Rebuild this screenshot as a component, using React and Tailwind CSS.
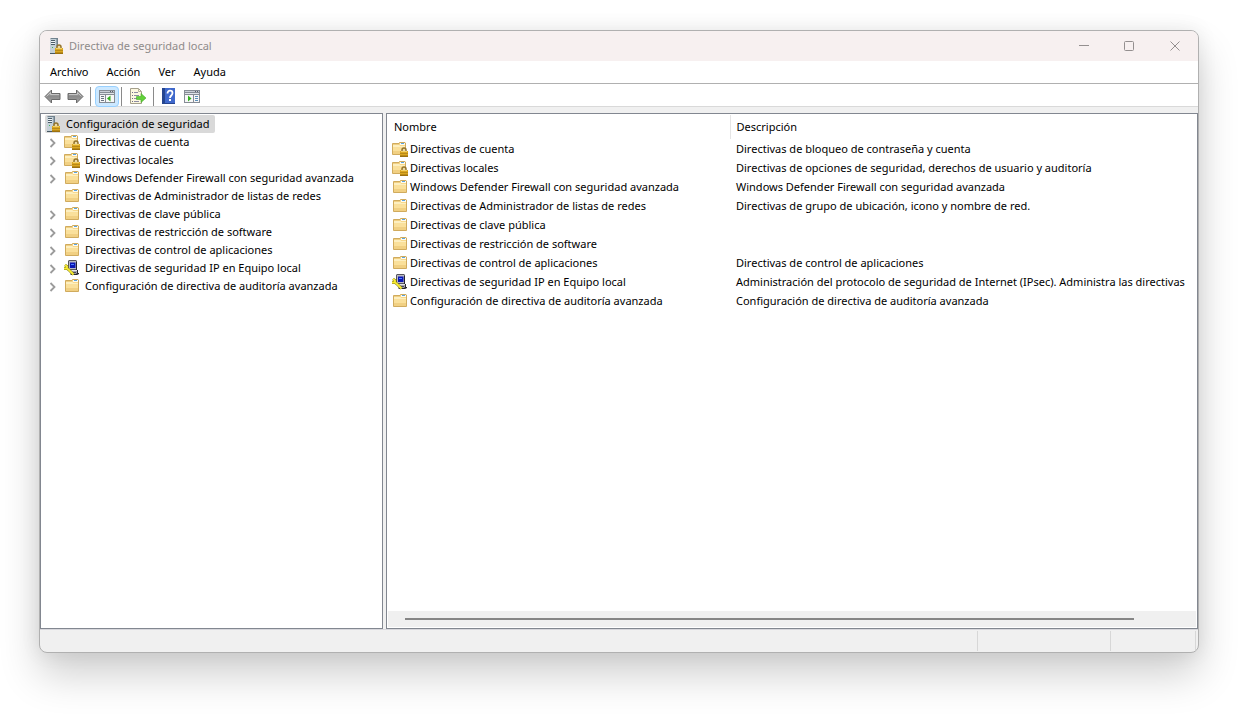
import React from "react";

const menus = ["Archivo", "Acción", "Ver", "Ayuda"];

const policies = [
  {
    name: "Directivas de cuenta",
    description: "Directivas de bloqueo de contraseña y cuenta",
    icon: "locked",
    expandable: true,
  },
  {
    name: "Directivas locales",
    description:
      "Directivas de opciones de seguridad, derechos de usuario y auditoría",
    icon: "locked",
    expandable: true,
  },
  {
    name: "Windows Defender Firewall con seguridad avanzada",
    description: "Windows Defender Firewall con seguridad avanzada",
    icon: "folder",
    expandable: true,
  },
  {
    name: "Directivas de Administrador de listas de redes",
    description: "Directivas de grupo de ubicación, icono y nombre de red.",
    icon: "folder",
    expandable: false,
  },
  {
    name: "Directivas de clave pública",
    description: "",
    icon: "folder",
    expandable: true,
  },
  {
    name: "Directivas de restricción de software",
    description: "",
    icon: "folder",
    expandable: true,
  },
  {
    name: "Directivas de control de aplicaciones",
    description: "Directivas de control de aplicaciones",
    icon: "folder",
    expandable: true,
  },
  {
    name: "Directivas de seguridad IP en Equipo local",
    description:
      "Administración del protocolo de seguridad de Internet (IPsec). Administra las directivas",
    icon: "ipsec",
    expandable: true,
  },
  {
    name: "Configuración de directiva de auditoría avanzada",
    description: "Configuración de directiva de auditoría avanzada",
    icon: "folder",
    expandable: true,
  },
];

const Padlock = () => (
  <g>
    <path
      d="M10 11V9a2 2 0 0 1 4 0v2"
      fill="#e9d9a8"
      stroke="#94742c"
      strokeWidth="1.5"
    />
    <rect x="8" y="10" width="8" height="6" fill="#dba721" />
    <path d="M9 10h6v1H9z" fill="#f3d269" />
    <path d="M8 12h8v1H8zM8 14h8v1H8z" fill="#b98a17" />
    <path d="M8 15h8v1H8z" fill="#9c7110" />
  </g>
);

const FolderShape = () => (
  <g>
    <path
      d="M.5 1.500h6.500l.5-1h5.500l.5.5v11.500H.5z"
      fill="#f6d88b"
      stroke="#d0ab5e"
    />
    <path d="M8 1h5v2H8z" fill="#fffaf0" />
    <path d="M9 1h3v1H9z" fill="#5aa6e0" />
    <path d="M1 2h6v1H1z" fill="#f0cf82" />
    <path d="M1 3h6.500l.5 1h5v1H1z" fill="#fdefc0" />
    <path d="M1 5h12v4H1z" fill="#fae09b" />
    <path d="M1 9h12v3H1z" fill="#f1d083" />
  </g>
);

const FolderIcon = () => (
  <svg width="16" height="16" viewBox="-1 -1 16 16" aria-hidden="true">
    <FolderShape />
  </svg>
);

const LockedFolderIcon = () => (
  <svg width="16" height="16" viewBox="0 -1 16 16" aria-hidden="true">
    <FolderShape />
    <g transform="translate(0 -1)">
      <Padlock />
    </g>
  </svg>
);

const ServerIcon = () => (
  <svg width="16" height="16" viewBox="0 0 16 16" aria-hidden="true">
    <path d="M1 1l1-1h7v15l-1 1H1z" fill="#71828e" />
    <path d="M1 1h6v15H1z" fill="#c4d0d8" />
    <path d="M7 1h1v15H7z" fill="#93a3ae" />
    <path d="M2 2h4v1H2zM2 4h4v1H2zM2 6h4v1H2z" fill="#4c5d69" />
    <path d="M2 3h4v1H2zM2 5h4v1H2z" fill="#eef3f6" />
    <path d="M3 9h1v1H3z" fill="#45b45a" />
    <path d="M1 15h7v1H1z" fill="#465864" />
    <g transform="translate(-2 0)">
      <Padlock />
    </g>
  </svg>
);

const IpsecIcon = () => (
  <svg width="16" height="16" viewBox="0 0 16 16" aria-hidden="true">
    <path d="M4 1l1-1h7l1 1v8l-1 1H5L4 9z" fill="#55555e" />
    <path d="M5 1h7v8H5z" fill="#b9b9c2" />
    <path d="M6 2.500h5.500V8H6z" fill="#0b17b4" />
    <path d="M7 4h3v1H7z" fill="#4b82ff" />
    <path d="M6 10l7 0 1 2v2l-2 1H6z" fill="#a4a4ac" />
    <path d="M5 10h8v1H5z" fill="#e4e4e8" />
    <path d="M12 2h1v8h1v3h1v1l-2 1H7v-1h5l1-1v-3h-1z" fill="#26262e" />
    <path d="M8 12h4v1H8z" fill="#4c4c55" />
    <path
      d="M1 5l2 1.500v2L4.500 9.500l5 5M0 8.500l3 0"
      fill="none"
      stroke="#7a7410"
      strokeWidth="2.800"
    />
    <path
      d="M1 5l2 1.500v2L4.500 9.500l5 5M0 8.500l3 0"
      fill="none"
      stroke="#f8ec35"
      strokeWidth="1.800"
    />
  </svg>
);

const ArrowIcon = ({ flip = false }) => (
  <svg width="17" height="15" viewBox="0 0 17 15" aria-hidden="true">
    <defs>
      <linearGradient id="arrowFill" x1="0" y1="0" x2="0" y2="1">
        <stop offset="0" stopColor="#b9b9b9" />
        <stop offset="0.5" stopColor="#8b8b8b" />
        <stop offset="1" stopColor="#a4a4a4" />
      </linearGradient>
    </defs>
    <path
      d="M1 7.500L7.500 1v3.500h8.500v6H7.500V14z"
      fill="url(#arrowFill)"
      stroke="#6a6a6a"
      strokeLinejoin="round"
      transform={flip ? "matrix(-1 0 0 1 17 0)" : undefined}
    />
    <path
      d="M2.500 7.500l4-4v2h8.500"
      fill="none"
      stroke="#c4c4c4"
      transform={flip ? "matrix(-1 0 0 1 17 0)" : undefined}
    />
  </svg>
);

const PaneFrame = () => (
  <g>
    <path d="M0 1h16v13H0z" fill="#868c95" />
    <path d="M1 2h14v1H1z" fill="#c9ced6" />
    <path d="M11 2h1v1h-1zM13 2h1v1h-1z" fill="#59606b" />
    <path d="M1 4h14v1H1z" fill="#dfe3e8" />
    <path d="M1 6h14v7H1z" fill="#f7f7f7" />
  </g>
);

const TreePaneIcon = () => (
  <svg width="16" height="15" viewBox="0 0 16 15" aria-hidden="true">
    <PaneFrame />
    <path d="M6 6h1v7H6z" fill="#868c95" />
    <path d="M2 7h3v1H2zM2 9h3v1H2zM2 11h3v1H2z" fill="#68717f" />
    <path d="M11.500 6.500v6L8 9.500z" fill="#35b021" />
  </svg>
);

const ActionPaneIcon = () => (
  <svg width="16" height="15" viewBox="0 0 16 15" aria-hidden="true">
    <PaneFrame />
    <path d="M9 6h1v7H9z" fill="#868c95" />
    <path d="M11 7h3v1h-3zM11 9h3v1h-3zM11 11h3v1h-3z" fill="#5b8fb8" />
    <path d="M4 6.500v6l3.500-3z" fill="#35b021" />
  </svg>
);

const ExportIcon = () => (
  <svg width="17" height="16" viewBox="0 0 17 16" aria-hidden="true">
    <path
      d="M.5.5h8l3 3v12H.5z"
      fill="#fdf8e0"
      stroke="#a5a08c"
    />
    <path d="M8.500.5v3h3" fill="none" stroke="#b5b09c" />
    <path d="M2 4h1v1H2zM2 7h1v1H2zM2 10h1v1H2zM2 13h1v1H2z" fill="#6e6d84" />
    <path d="M4 4h4v1H4zM4 7h5v1H4zM4 10h4v1H4zM4 13h5v1H4z" fill="#8e8ca4" />
    <path
      d="M6.500 8.500h4.500V5.500l5 4.500-5 4.500v-3H6.500z"
      fill="#62d13a"
      stroke="#46a92c"
      strokeWidth="0.600"
    />
  </svg>
);

const HelpIcon = () => (
  <svg width="14" height="16" viewBox="0 0 14 16" aria-hidden="true">
    <path d="M0 0h13v16H0z" fill="#26458f" />
    <path d="M2 0h11v15H2z" fill="#4069cc" />
    <path d="M2 0h1v16H2z" fill="#24468f" />
    <path
      d="M5.500 5.500c0-4 5-3.500 5-.5 0 2.500-2.500 2.500-2.500 5"
      fill="none"
      stroke="#fff"
      strokeWidth="1.800"
    />
    <path d="M7 11h2v2H7z" fill="#fff" />
  </svg>
);

const ItemIcon = ({ type }) => {
  if (type === "locked") return <LockedFolderIcon />;
  if (type === "ipsec") return <IpsecIcon />;
  return <FolderIcon />;
};

const TitleBar = () => (
  <header className="flex h-[30px] shrink-0 items-center bg-[#f7f0f0] pl-[9px] text-[#8f8b8b]">
    <ServerIcon />
    <h1 className="ml-1 flex-1">Directiva de seguridad local</h1>
    <button aria-label="Minimizar" className="flex w-[45px] justify-center">
      <svg width="11" height="11" viewBox="0 0 11 11">
        <path d="M0 4.500h10" stroke="#948f8f" />
      </svg>
    </button>
    <button aria-label="Maximizar" className="flex w-[45px] justify-center">
      <svg width="11" height="11" viewBox="0 0 11 11">
        <rect
          x="0.500"
          y="0.500"
          width="9"
          height="9"
          rx="1"
          fill="none"
          stroke="#948f8f"
        />
      </svg>
    </button>
    <button aria-label="Cerrar" className="flex w-[46px] justify-center">
      <svg width="11" height="11" viewBox="0 0 11 11">
        <path d="M.5.5l9 9M9.500.5l-9 9" stroke="#948f8f" />
      </svg>
    </button>
  </header>
);

const Divider = () => <span className="h-[19px] w-px bg-[#8a8a8a]" />;

const Toolbar = () => (
  <div
    role="toolbar"
    aria-label="Herramientas"
    className="flex h-[23px] shrink-0 items-center border-b border-[#d9d9d9] bg-white pt-0.5 pl-1"
  >
    <button aria-label="Atrás" className="mr-1.5">
      <ArrowIcon />
    </button>
    <button aria-label="Adelante" className="mr-1.5">
      <ArrowIcon flip />
    </button>
    <Divider />
    <button
      aria-label="Mostrar u ocultar árbol de consola"
      className="mr-0.5 ml-1 flex h-[21px] w-6 items-center justify-center rounded-sm border border-[#99d1ff] bg-[#cce8ff]"
    >
      <TreePaneIcon />
    </button>
    <Divider />
    <button aria-label="Exportar lista" className="mr-1.5 ml-2">
      <ExportIcon />
    </button>
    <Divider />
    <button aria-label="Ayuda" className="ml-2">
      <HelpIcon />
    </button>
    <button aria-label="Mostrar u ocultar panel de acciones" className="ml-2">
      <ActionPaneIcon />
    </button>
  </div>
);

const Tree = () => (
  <nav className="w-[343px] shrink-0 overflow-hidden border border-[#828790] bg-white pt-px pl-1">
    <a
      href="#raiz"
      className="flex h-[18px] w-fit items-center rounded-xs bg-[#d9d9d9] pr-1.5 pl-px"
    >
      <ServerIcon />
      <span className="ml-1">Configuración de seguridad</span>
    </a>
    <ul>
      {policies.map((item) => (
        <li key={item.name} className="flex h-[18px] items-center">
          <span className="flex w-[19px] pl-1">
            {item.expandable && (
              <button aria-label={`Expandir ${item.name}`}>
                <svg
                  width="7"
                  height="10"
                  viewBox="0 0 7 10"
                  className="mt-0.5"
                >
                  <path
                    d="M1.500 1l4 4-4 4"
                    fill="none"
                    stroke="#9b9b9b"
                    strokeWidth="1.800"
                  />
                </svg>
              </button>
            )}
          </span>
          <ItemIcon type={item.icon} />
          <a href="#directiva" className="ml-[5px]">
            {item.name}
          </a>
        </li>
      ))}
    </ul>
  </nav>
);

const PolicyList = () => (
  <section className="flex min-w-0 flex-1 flex-col border border-[#828790] bg-white p-px">
    <div className="min-h-0 flex-1 overflow-hidden">
      <table className="w-full table-fixed border-collapse text-left">
        <thead>
          <tr className="h-6">
            <th className="w-[342px] border-r border-[#e5e5e5] p-0 pl-1.5 font-normal">
              Nombre
            </th>
            <th className="p-0 pl-1.5 font-normal">Descripción</th>
          </tr>
        </thead>
        <tbody>
          {policies.map((item) => (
            <tr key={item.name} className="h-[19px]">
              <td className="p-0 pl-1">
                <div className="flex items-center gap-0.5">
                  <ItemIcon type={item.icon} />
                  {item.name}
                </div>
              </td>
              <td className="overflow-hidden p-0 pl-1.5 whitespace-nowrap">
                {item.description}
              </td>
            </tr>
          ))}
        </tbody>
      </table>
    </div>
    <div className="flex h-4 shrink-0 items-center bg-[#f0f0f0] pr-[62px] pl-[17px]">
      <div className="h-0.5 flex-1 bg-[#868686]" />
    </div>
  </section>
);

const App = () => {
  return (
    <div className="flex h-screen flex-col overflow-hidden bg-white px-[50px] pt-[30px] pb-[63px] pl-[39px] font-['Noto_Sans','Open_Sans',sans-serif] text-[11px] leading-4 text-black">
      <main className="flex min-h-0 flex-1 flex-col overflow-hidden rounded-lg border border-[#b0b0b0] bg-[#f0f0f0] shadow-[0_0_20px_rgba(0,0,0,0.08),0_22px_40px_rgba(0,0,0,0.19)]">
        <TitleBar />
        <div
          role="menubar"
          className="flex h-[23px] shrink-0 items-center gap-0.5 border-b border-[#b0b0b0] bg-white pl-0.5"
        >
          {menus.map((menu) => (
            <button key={menu} role="menuitem" className="px-2">
              {menu}
            </button>
          ))}
        </div>
        <Toolbar />
        <div className="mt-1.5 flex min-h-0 flex-1 gap-[3px]">
          <Tree />
          <PolicyList />
        </div>
        <footer className="flex h-[23px] shrink-0 border-t border-[#d7d7dc] py-px">
          <div className="flex-1 border-r border-[#d7d7d7]" />
          <div className="w-[133px] border-r border-[#d7d7d7]" />
          <div className="mr-0.5 w-[85px] border-r border-[#d7d7d7]" />
        </footer>
      </main>
    </div>
  );
};

export default App;
